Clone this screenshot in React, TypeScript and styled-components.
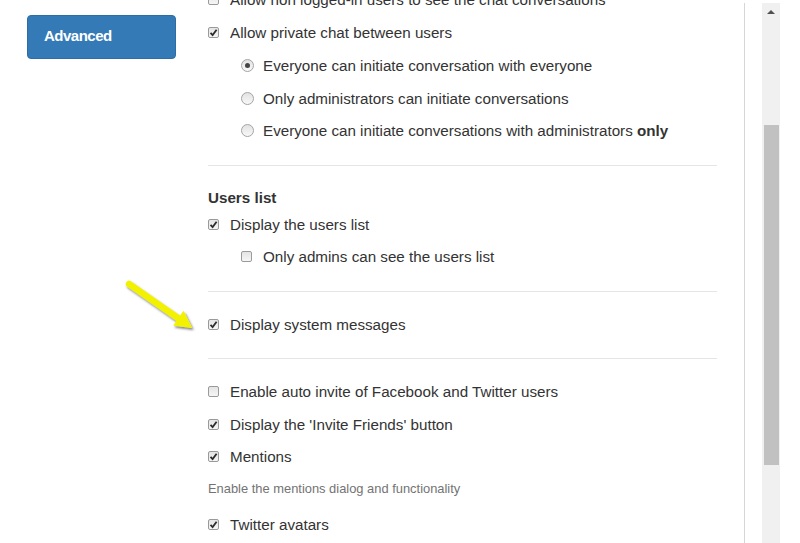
import styled, { createGlobalStyle } from 'styled-components'

const GlobalStyle = createGlobalStyle`
  html, body {
    margin: 0;
    padding: 0;
    background: #fff;
    overflow: hidden;
  }
  body {
    font-family: 'Liberation Sans', Arial, sans-serif;
    color: #333;
  }
`

const Page = styled.div`
  position: relative;
  display: flex;
  width: 800px;
  height: 543px;
  overflow: hidden;
`

const Sidebar = styled.div`
  width: 208px;
  flex-shrink: 0;
  box-sizing: border-box;
  padding: 15px 0 0 27px;
`

const NavButton = styled.div`
  box-sizing: border-box;
  width: 149px;
  height: 44px;
  display: flex;
  align-items: center;
  padding: 0 0 3px 16px;
  background: #337ab7;
  border: 1px solid #2e6da4;
  border-radius: 4px;
  color: #fff;
  font-weight: 700;
  font-size: 15px;
  letter-spacing: -0.5px;
`

const Content = styled.div`
  width: 509px;
  flex-shrink: 0;
  margin-top: -16.4px;
`

const Row = styled.label<{ $indent?: boolean }>`
  display: flex;
  align-items: center;
  height: 32.75px;
  padding-left: ${(p) => (p.$indent ? '33px' : '0')};
  font-size: 15.2px;
  white-space: nowrap;
`

const Box = styled.span`
  box-sizing: border-box;
  width: 11px;
  height: 11px;
  margin-right: 11px;
  flex-shrink: 0;
  display: flex;
  align-items: center;
  justify-content: center;
  border: 1px solid #9a9a9a;
  border-radius: 2px;
  background: linear-gradient(#e4e4e4, #f6f6f6);
`

const Radio = styled.span<{ $checked?: boolean }>`
  box-sizing: border-box;
  width: 13px;
  height: 13px;
  margin-left: 33px;
  margin-right: 9px;
  flex-shrink: 0;
  display: flex;
  align-items: center;
  justify-content: center;
  border: 1px solid #a4a4a4;
  border-radius: 50%;
  background: linear-gradient(#e2e2e2, #f8f8f8);

  &::after {
    content: '';
    display: ${(p) => (p.$checked ? 'block' : 'none')};
    width: 5px;
    height: 5px;
    border-radius: 50%;
    background: #444;
  }
`

const Divider = styled.hr`
  border: none;
  border-top: 1px solid #e5e5e5;
  margin: 17.5px 0 16px;
`

const Heading = styled.div`
  padding-top: 6px;
  line-height: 20px;
  font-size: 15.2px;
  font-weight: 700;
`

const HelpText = styled.div`
  padding: 8px 0 12px;
  line-height: 15px;
  font-size: 12.9px;
  color: #737373;
`

const Gutter = styled.div`
  width: 27px;
  flex-shrink: 0;
`

const VLine = styled.div`
  width: 1px;
  margin-top: 3px;
  background: #d6d6d6;
  flex-shrink: 0;
`

const ScrollTrack = styled.div`
  width: 18px;
  margin: 3px 0 0 17px;
  background: #f0f0f0;
  display: flex;
  flex-direction: column;
  align-items: center;
  flex-shrink: 0;
`

const ScrollArrow = styled.div`
  margin-top: 7px;
  width: 0;
  height: 0;
  border-left: 4px solid transparent;
  border-right: 4px solid transparent;
  border-bottom: 4px solid #505050;
`

const ScrollThumb = styled.div<{ $top: number; $height: number }>`
  margin-top: ${(p) => p.$top}px;
  width: 15px;
  height: ${(p) => p.$height}px;
  background: #c1c1c1;
`

const Pointer = styled.svg`
  position: absolute;
  left: 120px;
  top: 275px;
  overflow: visible;
`

const Check = () => (
  <svg width='9' height='9' viewBox='0 0 9 9'>
    <path
      d='M1.5 4.8 L3.6 7 L7.6 1.8'
      fill='none'
      stroke='#2b2b2b'
      strokeWidth='1.8'
    />
  </svg>
)

const CheckRow = ({
  label,
  checked,
  indent,
}: {
  label: React.ReactNode
  checked?: boolean
  indent?: boolean
}) => (
  <Row $indent={indent}>
    <Box>{checked && <Check />}</Box>
    <span>{label}</span>
  </Row>
)

const RadioRow = ({
  label,
  checked,
}: {
  label: React.ReactNode
  checked?: boolean
}) => (
  <Row>
    <Radio $checked={checked} />
    <span>{label}</span>
  </Row>
)

export default function App() {
  return (
    <>
      <GlobalStyle />
      <Page>
        <Sidebar>
          <NavButton>Advanced</NavButton>
        </Sidebar>
        <Content>
          <CheckRow label='Allow non logged-in users to see the chat conversations' />
          <CheckRow label='Allow private chat between users' checked />
          <RadioRow label='Everyone can initiate conversation with everyone' checked />
          <RadioRow label='Only administrators can initiate conversations' />
          <RadioRow
            label={
              <>
                Everyone can initiate conversations with administrators{' '}
                <b>only</b>
              </>
            }
          />
          <Divider />
          <Heading>Users list</Heading>
          <CheckRow label='Display the users list' checked />
          <CheckRow label='Only admins can see the users list' indent />
          <Divider />
          <CheckRow label='Display system messages' checked />
          <Divider />
          <CheckRow label='Enable auto invite of Facebook and Twitter users' />
          <CheckRow label="Display the 'Invite Friends' button" checked />
          <CheckRow label='Mentions' checked />
          <HelpText>Enable the mentions dialog and functionality</HelpText>
          <CheckRow label='Twitter avatars' checked />
        </Content>
        <Gutter />
        <VLine />
        <ScrollTrack>
          <ScrollArrow />
          <ScrollThumb $top={111} $height={340} />
        </ScrollTrack>

        {/* yellow pointer arrow drawn over the page */}
        <Pointer width='80' height='60' viewBox='0 0 80 60'>
          <defs>
            <filter id='shadow' x='-20%' y='-20%' width='150%' height='150%'>
              <feDropShadow dx='1.5' dy='2' stdDeviation='1.2' floodColor='#555' floodOpacity='0.7' />
            </filter>
          </defs>
          <g filter='url(#shadow)'>
            <line
              x1='9'
              y1='9'
              x2='60'
              y2='44.5'
              stroke='#f2f200'
              strokeWidth='6.5'
              strokeLinecap='round'
            />
            <polygon points='71.5,52.5 63.5,36.5 53.8,50.3' fill='#f2f200' stroke='#f2f200' strokeWidth='1' strokeLinejoin='round' />
          </g>
        </Pointer>
      </Page>
    </>
  )
}
